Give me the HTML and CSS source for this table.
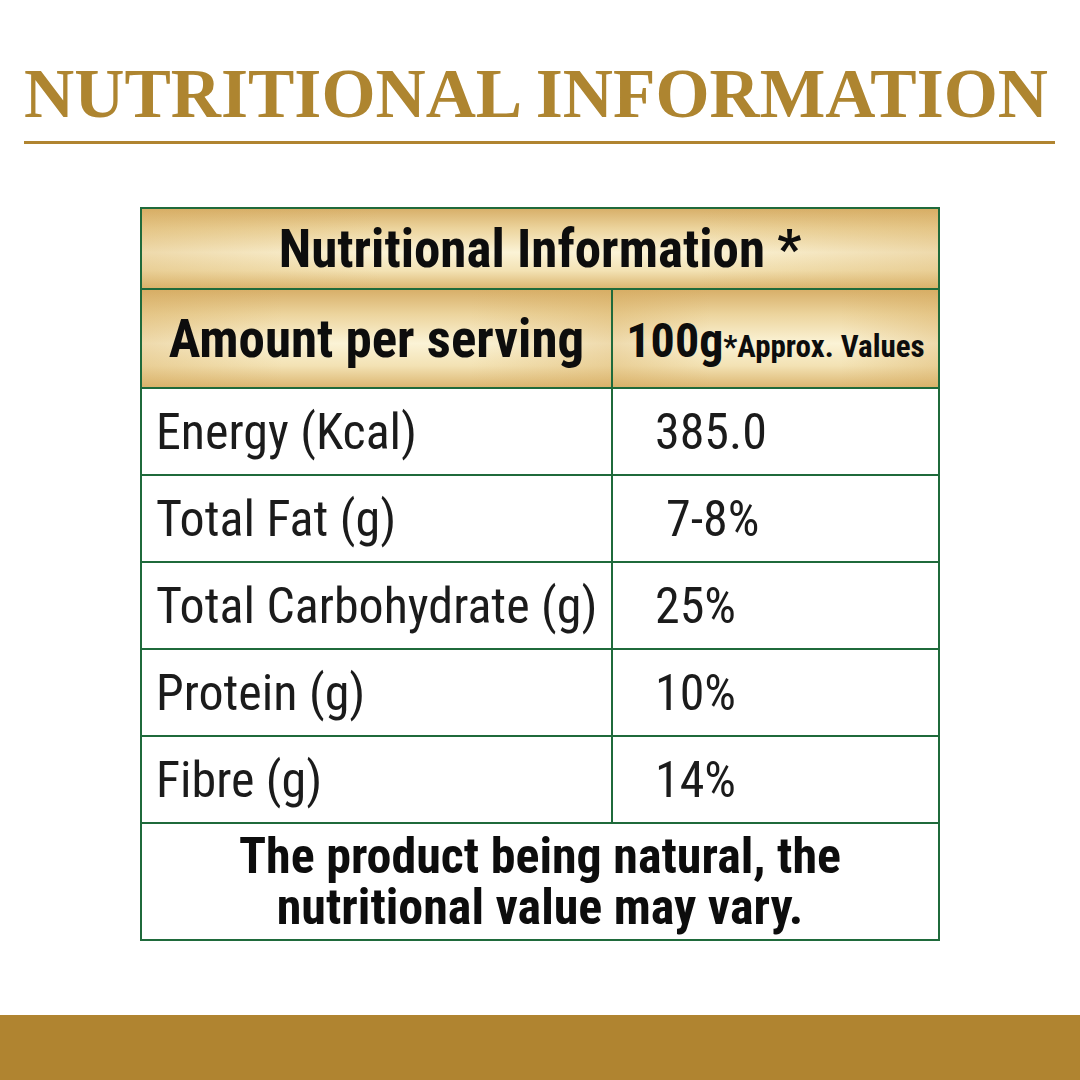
FILE: index.html
```html
<!DOCTYPE html>
<html lang="en">
<head>
<meta charset="utf-8">
<title>Nutritional Information</title>
<link rel="stylesheet" href="styles.css">
</head>
<body>
<div class="page">
  <header class="title-wrap">
    <h1 class="title">NUTRITIONAL INFORMATION</h1>
  </header>
  <section class="panel">
    <div class="facts">
      <div class="cell head head-main"><span class="txt">Nutritional Information *</span></div>
      <div class="cell head head-sub"><span class="txt">Amount per serving</span></div>
      <div class="cell head head-sub"><span class="txt"><span class="big">100g</span><span class="small">*Approx. Values</span></span></div>

      <div class="cell label"><span class="txt">Energy (Kcal)</span></div>
      <div class="cell value"><span class="txt">385.0</span></div>

      <div class="cell label"><span class="txt">Total Fat (g)</span></div>
      <div class="cell value value-indent"><span class="txt">7-8%</span></div>

      <div class="cell label"><span class="txt">Total Carbohydrate (g)</span></div>
      <div class="cell value"><span class="txt">25%</span></div>

      <div class="cell label"><span class="txt">Protein (g)</span></div>
      <div class="cell value"><span class="txt">10%</span></div>

      <div class="cell label"><span class="txt">Fibre (g)</span></div>
      <div class="cell value"><span class="txt">14%</span></div>

      <div class="cell note"><span class="txt">The product being natural, the<br>nutritional value may vary.</span></div>
    </div>
  </section>
  <footer class="bar"></footer>
</div>
</body>
</html>
```

FILE: styles.css
```css
* { box-sizing: border-box; }

html, body {
  margin: 0;
  padding: 0;
  background: #ffffff;
}

.page {
  width: 1080px;
  height: 1080px;
  display: flex;
  flex-direction: column;
  background: #ffffff;
}

.title-wrap {
  margin: 54px 25px 0 24px;
  padding-bottom: 8px;
  border-bottom: 3px solid #b08430;
}

.title {
  margin: 0;
  font-family: "Liberation Serif", "Times New Roman", serif;
  font-weight: 700;
  font-size: 69.5px;
  line-height: 79px;
  color: #ae8530;
  white-space: nowrap;
}

.panel {
  margin-top: 63px;
  padding-left: 140px;
}

.facts {
  width: 800px;
  display: grid;
  grid-template-columns: 469px 325px;
  grid-template-rows: 79px 97px 85px 85px 85px 85px 85px 115px;
  gap: 2px;
  padding: 2px;
  background: #1f6a3b;
  font-family: "Roboto", "Liberation Sans", sans-serif;
  font-stretch: 80%;
  color: #1b1b1b;
}

.cell {
  background: #ffffff;
  display: flex;
  align-items: center;
  white-space: nowrap;
}

.head {
  justify-content: center;
  font-weight: 700;
  color: #0d0d0d;
  background:
    linear-gradient(90deg, rgba(214,170,92,0.35) 0%, rgba(255,255,255,0) 30%, rgba(255,255,255,0) 70%, rgba(214,170,92,0.35) 100%),
    linear-gradient(180deg, #d8b06a 0%, #ecd49d 25%, #fbf3d6 55%, #f3e2b4 78%, #dcb772 100%);
}

.head-main {
  grid-column: 1 / -1;
  font-size: 53px;
}

.head-sub {
  font-size: 53px;
}

.head-sub .big { font-size: 48px; }
.head-sub .small { font-size: 31px; }

.label {
  padding-left: 14px;
  font-size: 50px;
}

.value {
  padding-left: 42px;
  font-size: 50px;
}

.value-indent { padding-left: 53px; }

.note {
  grid-column: 1 / -1;
  justify-content: center;
  text-align: center;
  font-weight: 700;
  font-size: 50px;
  line-height: 51px;
  color: #0d0d0d;
}

.bar {
  margin-top: auto;
  height: 65px;
  background: #b08430;
}
```
